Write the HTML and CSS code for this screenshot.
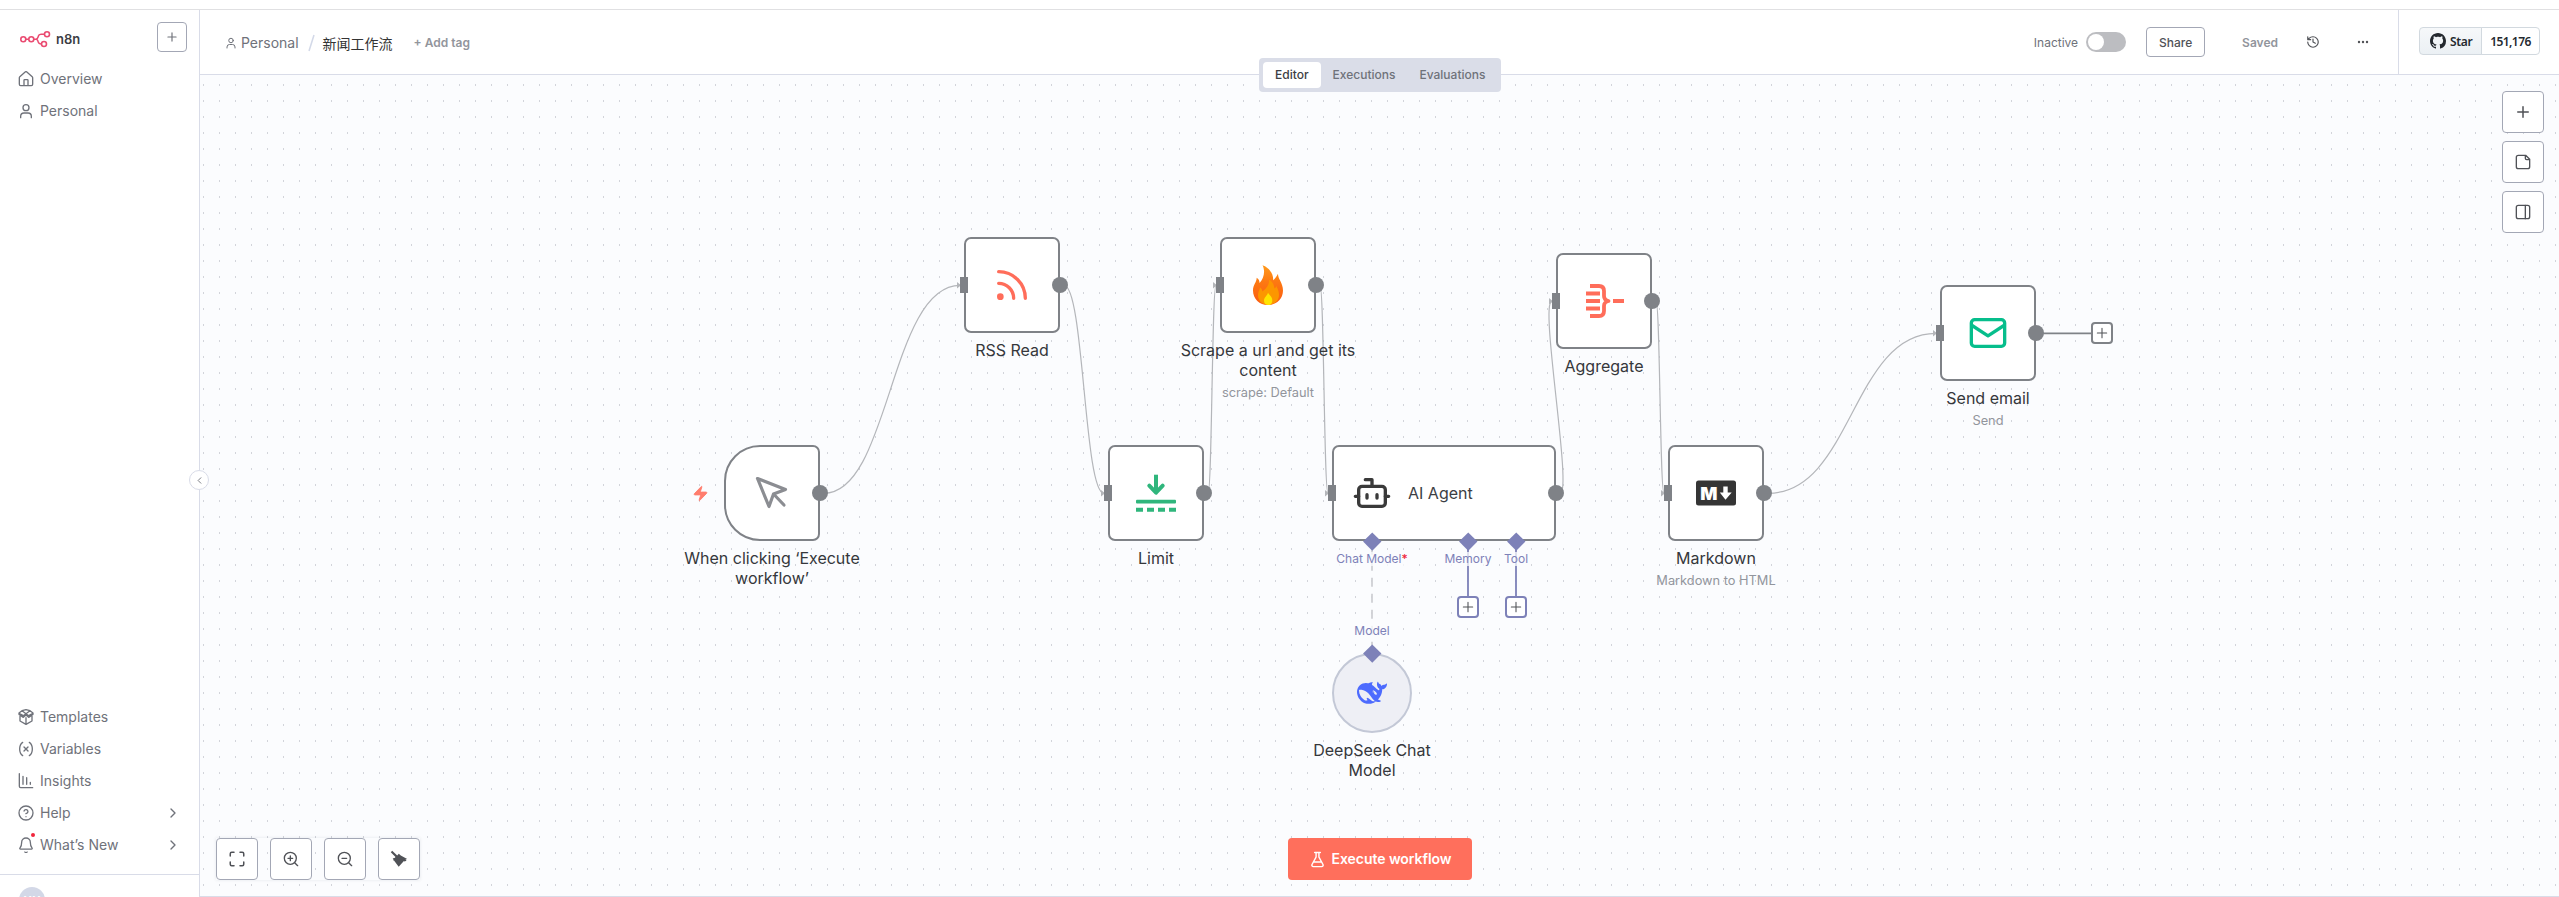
FILE: index.html
```html
<!DOCTYPE html>
<html lang="en">
<head>
<meta charset="utf-8">
<title>n8n workflow</title>
<link rel="stylesheet" href="styles.css">
</head>
<body>
<svg width="0" height="0" class="defs">
  <symbol id="plus" viewBox="0 0 24 24"><path d="M5 12h14M12 5v14"/></symbol>
  <symbol id="user" viewBox="0 0 24 24"><circle cx="12" cy="7" r="4.5"/><path d="M20 22v-2a5 5 0 0 0-5-5H9a5 5 0 0 0-5 5v2"/></symbol>
  <symbol id="chev" viewBox="0 0 24 24"><path d="m9 18 6-6-6-6"/></symbol>
</svg>
<div class="app">
  <aside class="sidebar">
    <div class="brand">
      <svg class="logo" width="31" height="18" viewBox="0 0 31 18"><circle cx="3.3" cy="9.2" r="2.5"/><circle cx="11.3" cy="9.2" r="2.5"/><circle cx="27" cy="4.2" r="2.5"/><circle cx="24" cy="14" r="2.5"/><path d="M5.8 9.2h3M13.8 9.2h2q1.800 0 2.200-2l.3-1q.5-2 2.700-2h3.500M15.800 9.200q1.800 0 2.200 2l.3.900q.5 1.900 3.200 1.900"/></svg>
      <span class="brand-name">n8n</span>
      <button class="add"><svg class="ic" width="14" height="14"><use href="#plus"/></svg></button>
    </div>
    <nav class="menu">
      <a class="item"><svg class="ic" width="16" height="16" viewBox="0 0 24 24"><path d="M15 22v-8a1 1 0 0 0-1-1h-4a1 1 0 0 0-1 1v8M2 10a2 2 0 0 1 .7-1.500l8-7a2 2 0 0 1 2.600 0l8 7A2 2 0 0 1 22 10v10a2 2 0 0 1-2 2H4a2 2 0 0 1-2-2z"/></svg>Overview</a>
      <a class="item"><svg class="ic" width="16" height="16"><use href="#user"/></svg>Personal</a>
    </nav>
    <nav class="menu bottom">
      <a class="item"><svg class="ic" width="16" height="16" viewBox="0 0 24 24"><path d="M12 13v9M3 11v7l9 5 9-5v-7M12 7l-6-4.500L1.500 6v2L8 12.500 12 9l4 3.500L22.500 8V6L18 2.500zM1.500 6.500 8 10l4-3 4 3 6.500-3.500M6 2.500 12 1l6 1.500"/></svg>Templates</a>
      <a class="item"><svg class="ic" width="16" height="16" viewBox="0 0 24 24"><path d="M7 2s-4.500 3-4.500 10S7 22 7 22M17 2s4.500 3 4.500 10S17 22 17 22M15 9l-6 6M9 9l6 6"/></svg>Variables</a>
      <a class="item"><svg class="ic" width="16" height="16" viewBox="0 0 24 24"><path d="M2 1v19a2 2 0 0 0 2 2h18M7.500 17V5M13 17V7M18.500 17v-3"/></svg>Insights</a>
      <a class="item"><svg class="ic" width="16" height="16" viewBox="0 0 24 24"><circle cx="12" cy="12" r="10.500"/><path d="M9.090 9a3 3 0 0 1 5.830 1c0 2-3 3-3 3M12 17.500h.01"/></svg>Help<svg class="ic go" width="16" height="16"><use href="#chev"/></svg></a>
      <a class="item"><span class="bell"><svg class="ic" width="16" height="16" viewBox="0 0 24 24"><path d="M10.300 22.500a2 2 0 0 0 3.400 0M3 16.500a1 1 0 0 0 .7 1.700h16.600a1 1 0 0 0 .7-1.700C19.400 15 18.500 13 18.500 8a6.500 6.500 0 0 0-13 0c0 5-1 7-2.500 8.500z"/></svg><i class="dot"></i></span>What’s New<svg class="ic go" width="16" height="16"><use href="#chev"/></svg></a>
    </nav>
    <div class="account"><span class="avatar">XX</span></div>
  </aside>

  <main class="main">
    <header class="header">
      <div class="crumbs">
        <svg class="ic" width="12" height="12"><use href="#user"/></svg>
        <span class="crumb">Personal</span>
        <svg class="slash" width="7" height="18" viewBox="0 0 7 18"><path d="M1 17 6 1"/></svg>
        <span class="title">新闻工作流</span>
        <span class="tag">+ Add tag</span>
      </div>
      <div class="actions">
        <span class="inactive">Inactive</span>
        <span class="toggle"><i></i></span>
        <button class="share">Share</button>
        <span class="saved">Saved</span>
        <svg class="ic history" width="14" height="14" viewBox="0 0 24 24"><path d="M3 12a9 9 0 1 0 9-9 9.750 9.750 0 0 0-6.740 2.740L3 8M3 3v5h5M12 7v5l4 2"/></svg>
        <svg class="more" width="12" height="4" viewBox="0 0 12 4"><circle cx="2" cy="2" r="1.200"/><circle cx="6" cy="2" r="1.200"/><circle cx="10" cy="2" r="1.200"/></svg>
      </div>
      <div class="github">
        <span class="gh-star"><svg width="16" height="16" viewBox="0 0 16 16"><path d="M8 0C3.580 0 0 3.580 0 8c0 3.540 2.290 6.530 5.470 7.590.4.070.55-.17.55-.38 0-.19-.01-.82-.01-1.490-2.010.37-2.530-.49-2.690-.94-.09-.23-.48-.94-.82-1.130-.28-.15-.68-.52-.01-.53.63-.01 1.080.58 1.230.82.72 1.210 1.870.87 2.330.66.07-.52.28-.87.51-1.070-1.780-.2-3.640-.89-3.640-3.950 0-.87.31-1.590.82-2.150-.08-.2-.36-1.020.08-2.120 0 0 .67-.21 2.200.82.64-.18 1.320-.27 2-.27s1.360.09 2 .27c1.530-1.040 2.200-.82 2.200-.82.44 1.100.16 1.920.08 2.120.51.56.82 1.270.82 2.150 0 3.070-1.870 3.750-3.650 3.950.29.25.54.73.54 1.480 0 1.070-.01 1.930-.01 2.200 0 .21.15.46.55.38A8.010 8.010 0 0 0 16 8c0-4.420-3.580-8-8-8z"/></svg>Star</span><span class="gh-count">151,176</span>
      </div>
    </header>

    <section class="canvas">
      <svg class="flow" viewBox="200 75 2359 821">
        <defs><pattern id="dots" x="203" y="84" width="16" height="16" patternUnits="userSpaceOnUse"><rect width="1" height="2" fill="#d2d4da"/></pattern></defs>
        <rect x="200" y="75" width="2359" height="821" fill="url(#dots)"/>
        <g class="edges">
          <path d="M824 493.300C890 493.300 890 285.300 960 285.300"/>
          <path d="M1064 285.300C1084 285.300 1084 493.300 1104 493.300"/>
          <path d="M1208 493.300C1212 493.300 1212 285.300 1216 285.300"/>
          <path d="M1320 285.300C1324 285.300 1324 493.300 1328 493.300"/>
          <path d="M1560 493.300C1573 493.300 1539 301.300 1552 301.300"/>
          <path d="M1656 301.300C1660 301.300 1660 493.300 1664 493.300"/>
          <path d="M1768 493.300C1852 493.300 1852 333.300 1936 333.300"/>
        </g>
        <path class="arrows" d="M957 282l4 3.300-4 3.300zM1101 490l4 3.300-4 3.300zM1213 282l4 3.300-4 3.300zM1325 490l4 3.300-4 3.300zM1549 298l4 3.300-4 3.300zM1661 490l4 3.300-4 3.300zM1933 330l4 3.300-4 3.300z"/>
        <path class="dashed" d="M1372 545.700V650"/>
        <path class="ai-line" d="M1468 545V596M1516 545V596"/>
        <path class="out-line" d="M2040 333.300H2091"/>
      </svg>

      <div class="node n-trigger"><svg class="bolt" width="17" height="17" viewBox="0 0 24 24"><path d="M4 14a1 1 0 0 1-.78-1.630l9.900-10.200a.5.5 0 0 1 .86.46l-1.920 6.020A1 1 0 0 0 13 10h7a1 1 0 0 1 .78 1.630l-9.900 10.200a.5.5 0 0 1-.86-.46l1.920-6.020A1 1 0 0 0 11 14z"/></svg>
        <svg class="g" width="40" height="40" viewBox="0 0 40 40"><g fill="none" stroke="#8b8d92" stroke-width="3.200" stroke-linecap="round" stroke-linejoin="round"><path d="M5.500 5.500 33.500 16.500 21.500 21 17 33.500z"/><path d="m22 21.500 10 10.500"/></g></svg>
        <i class="out"></i></div>
      <div class="cap c-trigger">When clicking ‘Execute<br>workflow’</div>

      <div class="node n-rss"><i class="in"></i><svg class="g" width="40" height="40" viewBox="0 0 24 24"><g fill="none" stroke="#ff6d5a" stroke-width="2" stroke-linecap="round"><path d="M4 11a9 9 0 0 1 9 9M4 4a16 16 0 0 1 16 16"/></g><circle cx="5" cy="19" r="2" fill="#ff6d5a"/></svg><i class="out"></i></div>
      <div class="cap c-rss">RSS Read</div>

      <div class="node n-limit"><i class="in"></i><svg class="g" width="40" height="40" viewBox="0 0 40 40"><path fill="none" stroke="#2fb67c" stroke-width="4" stroke-linejoin="round" d="M20 1.700v18"/><path fill="none" stroke="#2fb67c" stroke-width="4" stroke-linecap="round" stroke-linejoin="round" d="m13.300 12.700 6.700 7 6.700-7"/><rect y="26.700" width="40" height="3.800" rx="1" fill="#2fb67c"/><path fill="#2fb67c" d="M0 34.700h7v4H0zM11 34.700h7v4h-7zM22 34.700h7v4h-7zM33 34.700h7v4h-7z"/></svg><i class="out"></i></div>
      <div class="cap c-limit">Limit</div>

      <div class="node n-scrape"><i class="in"></i><svg class="g" width="30" height="40" viewBox="0 0 30 40"><defs><linearGradient id="fire" x1="0" y1="0" x2="0" y2="1"><stop offset="0" stop-color="#ff9a1c"/><stop offset=".4" stop-color="#fd7a12"/><stop offset="1" stop-color="#fb5a12"/></linearGradient></defs><path fill="url(#fire)" d="M9.500.2C14 1.500 20.500 7 20.200 15.200 22 14 23.500 11.500 25 8.800 24.800 14 30 18 30 25.500 30 34 23.500 40 15 40S0 34 0 25.500C0 20 3.500 17.500 3.700 12.800 5.500 14 6.500 15.500 6.600 18 11 13.500 12.500 6 9.500.2z"/><path fill="#fc9600" d="M16 14.500C20 17 21 20 21.500 23.500 22.500 23 23 22 23.200 21 25 24 26 27 26 30 26 36 21 39.800 15.200 39.800S5 36 5 30C5 27 6.500 25.500 7 22.500 8.500 23.500 9.300 25 9.500 26.500 13.500 23.500 16.500 19.500 16 14.500z"/><path fill="#ffe400" d="M15 27.800C16 30 19.300 31.500 19.300 35.500 19.300 38.500 17.500 40 15.200 40S11 38.500 11 35.500C11 32.500 14 31 15 27.800z"/></svg><i class="out"></i></div>
      <div class="cap c-scrape">Scrape a url and get its<br>content<small>scrape: Default</small></div>

      <div class="node n-agent"><i class="in"></i><svg class="g" width="40" height="40" viewBox="0 0 24 24"><g fill="none" stroke="#3a3a3a" stroke-width="2" stroke-linecap="round" stroke-linejoin="round"><path d="M12 8V4H8"/><rect width="16" height="12" x="4" y="8" rx="2"/><path d="M2 14h2M20 14h2M15 13v2M9 13v2"/></g></svg><span>AI Agent</span><i class="out"></i></div>
      <i class="dia d-chat"></i><i class="dia d-mem"></i><i class="dia d-tool"></i>
      <div class="port p-chat">Chat Model<b>*</b></div><div class="port p-mem">Memory</div><div class="port p-tool">Tool</div><div class="port p-model">Model</div>
      <div class="nplus ai np-mem"><svg width="16" height="16" class="ic"><use href="#plus"/></svg></div>
      <div class="nplus ai np-tool"><svg width="16" height="16" class="ic"><use href="#plus"/></svg></div>

      <div class="node n-deep"><svg class="g" width="30" height="30" viewBox="0 0 24 24"><path fill="#4d6bfe" d="M23.748 4.482c-.254-.124-.364.113-.512.234-.051.039-.094.09-.137.136-.372.397-.806.657-1.373.626-.829-.046-1.537.214-2.163.848-.133-.782-.575-1.248-1.247-1.548-.352-.156-.708-.311-.955-.65-.172-.241-.219-.51-.305-.774-.055-.16-.11-.323-.293-.35-.2-.031-.278.136-.356.276-.313.572-.434 1.202-.422 1.840.027 1.436.633 2.580 1.838 3.393.137.093.172.187.129.323-.082.280-.18.552-.266.833-.055.179-.137.217-.329.140a5.526 5.526 0 0 1-1.736-1.180c-.857-.828-1.631-1.742-2.597-2.458a11.365 11.365 0 0 0-.689-.471c-.985-.957.130-1.743.388-1.836.270-.098.093-.432-.779-.428-.872.004-1.670.295-2.687.684a3.055 3.055 0 0 1-.465.137 9.597 9.597 0 0 0-2.883-.102c-1.885.210-3.390 1.102-4.497 2.623C.082 8.606-.231 10.684.152 12.850c.403 2.284 1.569 4.175 3.360 5.653 1.858 1.533 3.997 2.284 6.438 2.140 1.482-.085 3.133-.284 4.994-1.860.470.234.962.327 1.780.397.630.059 1.236-.03 1.705-.128.735-.156.684-.837.419-.961-2.155-1.004-1.682-.595-2.113-.926 1.096-1.296 2.746-2.642 3.392-7.003.05-.347.007-.565 0-.845-.004-.17.035-.237.230-.256a4.173 4.173 0 0 0 1.545-.475c1.396-.763 1.960-2.015 2.093-3.517.02-.23-.004-.467-.247-.588zM11.581 18c-2.089-1.642-3.102-2.183-3.520-2.160-.392.024-.321.471-.235.763.09.288.207.486.371.739.114.167.192.416-.113.603-.673.416-1.842-.14-1.897-.167-1.361-.802-2.500-1.860-3.301-3.307-.774-1.393-1.224-2.887-1.298-4.482-.02-.386.093-.522.477-.592a4.696 4.696 0 0 1 1.529-.039c2.132.312 3.946 1.265 5.468 2.774.868.860 1.525 1.887 2.202 2.891.720 1.066 1.494 2.082 2.480 2.914.348.292.625.514.891.677-.802.09-2.140.110-3.054-.614zm1-6.440a.306.306 0 0 1 .415-.287.302.302 0 0 1 .2.288.306.306 0 0 1-.31.307.303.303 0 0 1-.304-.308zm3.110 1.596c-.2.081-.399.151-.59.160a1.245 1.245 0 0 1-.798-.254c-.274-.23-.47-.358-.552-.758a1.730 1.730 0 0 1 .016-.588c.07-.327-.008-.537-.239-.727-.187-.156-.426-.199-.688-.199a.559.559 0 0 1-.254-.078c-.11-.054-.2-.19-.114-.358.028-.054.160-.186.192-.21.356-.202.767-.136 1.146.016.352.144.618.408 1.001.782.391.451.462.576.685.914.176.265.336.537.445.848.067.195-.019.354-.25.452z"/></svg></div>
      <i class="dia d-deep"></i>
      <div class="cap c-deep">DeepSeek Chat<br>Model</div>

      <div class="node n-agg"><i class="in"></i><svg class="g" width="40" height="40" viewBox="0 0 40 40"><g fill="none" stroke="#ff6d5a" stroke-width="3.800" stroke-linejoin="round"><path d="M2 12.500h14M2 20h14M2 27.500h14M29 20h11M6 5h9q5 0 5 5v5q0 4 4.500 5-4.500 1-4.500 5v5q0 5-5 5H6"/></g></svg><i class="out"></i></div>
      <div class="cap c-agg">Aggregate</div>

      <div class="node n-md"><i class="in"></i><svg class="g" width="40" height="26" viewBox="0 0 40 26"><rect y=".6" width="40" height="24.800" rx="2.500" fill="#353535"/><text class="md" x="12.800" y="19.500" text-anchor="middle">M</text><path fill="#fff" d="M27.300 6.400h4.400v6.100h4L29.500 19.700 23.800 12.500h3.500z"/></svg><i class="out"></i></div>
      <div class="cap c-md">Markdown<small>Markdown to HTML</small></div>

      <div class="node n-mail"><i class="in"></i><svg class="g" width="40" height="40" viewBox="0 0 24 24"><g fill="none" stroke="#06be8c" stroke-width="2" stroke-linejoin="round"><rect width="20" height="16" x="2" y="4" rx="2"/><path d="m2 7.200 10 6.500 10-6.500"/></g></svg><i class="out"></i></div>
      <div class="nplus np-out"><svg width="16" height="16" class="ic"><use href="#plus"/></svg></div>
      <div class="cap c-mail">Send email<small>Send</small></div>

      <div class="tools-right">
        <button><svg class="ic" width="18" height="18"><use href="#plus"/></svg></button>
        <button><svg class="ic" width="16" height="16" viewBox="0 0 24 24"><path d="M16 2H5a3 3 0 0 0-3 3v14a3 3 0 0 0 3 3h14a3 3 0 0 0 3-3V8zM15.500 2.500V6.500a2 2 0 0 0 2 2h4"/></svg></button>
        <button><svg class="ic" width="16" height="16" viewBox="0 0 24 24"><rect x="2" y="2" width="20" height="20" rx="3"/><path d="M15.500 2v20"/></svg></button>
      </div>

      <div class="dock">
        <div class="tools">
          <button><svg class="ic" width="18" height="18" viewBox="0 0 24 24"><path d="M8 3H5a2 2 0 0 0-2 2v3M21 8V5a2 2 0 0 0-2-2h-3M3 16v3a2 2 0 0 0 2 2h3M16 21h3a2 2 0 0 0 2-2v-3"/></svg></button>
          <button><svg class="ic" width="16" height="16" viewBox="0 0 24 24"><circle cx="11" cy="11" r="9"/><path d="m22 22-4.500-4.500M11 7.500v7M7.500 11h7"/></svg></button>
          <button><svg class="ic" width="16" height="16" viewBox="0 0 24 24"><circle cx="11" cy="11" r="9"/><path d="m22 22-4.500-4.500M7.500 11h7"/></svg></button>
          <button><svg width="18" height="18" viewBox="0 0 18 18"><path fill="#505257" d="M.8 2.200 2.200.8l5 4.600 1.600-1.600 2 1.700L17.200 9l-1.700.5 1 1.300-2 .6-.6-.3-5.200 5.600L4 10.600l-1-.3.500-1.200-.9-.8 2-.4.900-.9z"/></svg></button>
        </div>
        <button class="execute"><svg class="ic" width="17" height="17" viewBox="0 0 24 24"><path d="M14 2v6a2 2 0 0 0 .25.960l5.510 10.080A2 2 0 0 1 18 22H6a2 2 0 0 1-1.760-2.960l5.510-10.080A2 2 0 0 0 10 8V2M6.450 15.500h11.100M8 2h8"/></svg><span>Execute workflow</span></button>
      </div>
    </section>
  </main>

  <div class="tabs"><span class="on">Editor</span><span>Executions</span><span>Evaluations</span></div>
  <button class="collapse"><svg class="ic" width="11" height="11" viewBox="0 0 24 24"><path d="m15 18-6-6 6-6"/></svg></button>
</div>
</body>
</html>
```
FILE: styles.css
```css
* { box-sizing: border-box; }
body { margin: 0; background: #fff; font-family: Inter, "Noto Sans CJK SC", sans-serif; color: #6f727a; }
button { font: inherit; color: inherit; padding: 0; margin: 0; background: #fff; border: 1px solid #a3a7b5; border-radius: 4px; display: flex; align-items: center; justify-content: center; }
i { display: block; font-style: normal; }
.defs { position: absolute; }
.ic { fill: none; stroke: currentColor; stroke-width: 2; stroke-linecap: round; stroke-linejoin: round; flex: none; }
.app { position: relative; display: flex; width: 2559px; height: 897px; padding-top: 9px; overflow: hidden; }
.app::before { content: ""; position: absolute; left: 0; right: 0; top: 9px; height: 1px; background: #e0e0e2; }

.sidebar { width: 200px; flex: none; border-right: 1px solid #d9dce8; display: flex; flex-direction: column; padding-top: 13px; }
.brand { display: flex; align-items: center; height: 30px; padding: 0 12px 0 20px; }
.logo { fill: none; stroke: #ea4b71; stroke-width: 1.600; margin-top: 4px; }
.brand-name { font-size: 13px; font-weight: 600; color: #3c3e44; margin: 4px 0 0 5px; flex: 1; }
.add { width: 30px; height: 30px; }
.menu { display: flex; flex-direction: column; padding: 11px 18px 0 18px; }
.item { display: flex; align-items: center; gap: 6px; height: 32px; padding-bottom: 2px; font-size: 14px; }
.item .ic { margin-top: 2px; }
.item .go { margin-left: auto; }
.bell { position: relative; display: flex; }
.dot { position: absolute; right: -1px; top: -2px; width: 4px; height: 4px; border-radius: 50%; background: #f0263c; }
.bottom { margin-top: auto; padding-top: 0; padding-bottom: 13px; }
.account { height: 23px; border-top: 1px solid #d9dce8; padding: 12px 0 0 19px; overflow: hidden; }
.avatar { display: flex; align-items: center; justify-content: center; width: 26px; height: 26px; border-radius: 50%; background: #d3d8e7; color: #fff; font-size: 12px; font-weight: 600; }

.main { flex: 1; display: flex; flex-direction: column; }
.header { height: 66px; flex: none; display: flex; border-bottom: 1px solid #d9dce8; padding-top: 1px; }
.crumbs { flex: 1; display: flex; align-items: center; padding-left: 25px; padding-top: 1px; font-size: 14px; }
.crumb { margin-left: 4px; }
.slash { margin: 0 8px 0 9px; fill: none; stroke: #d3d9e8; stroke-width: 1.500; }
.title { color: #333; }
.tag { margin-left: 21px; font-size: 12px; font-weight: 600; color: #92959c; }
.actions { display: flex; align-items: center; font-size: 12px; padding-right: 29px; }
.inactive { margin-right: 8px; padding-top: 1px; }
.toggle { width: 40px; height: 20px; border-radius: 10px; background: #bcbdc1; padding: 2px; margin-right: 20px; }
.toggle i { width: 16px; height: 16px; border-radius: 50%; background: #fff; }
.share { width: 59px; height: 30px; color: #505257; font-weight: 500; margin-right: 37px; }
.saved { font-weight: 600; color: #92959c; margin-right: 28px; }
.history { color: #505257; margin-right: 37px; }
.more { fill: #505257; }
.github { width: 161px; border-left: 1px solid #d9dce8; display: flex; align-items: center; padding: 0 0 2px 20px; font: 600 12px "Noto Sans", sans-serif; letter-spacing: -.6px; color: #24292f; }
.gh-star, .gh-count { height: 28px; display: flex; align-items: center; border: 1px solid #d2d9df; }
.gh-star { width: 63px; gap: 4px; padding-left: 10px; letter-spacing: -.3px; background: linear-gradient(#f6f8fa, #ebf0f4); border-radius: 4px 0 0 4px; }
.gh-star svg { fill: #24292f; }
.gh-count { width: 59px; margin-left: -1px; justify-content: center; border-radius: 0 4px 4px 0; }

.tabs { position: absolute; left: 1259px; top: 58px; width: 242px; height: 34px; border-radius: 4px; background: #dadde8; display: flex; padding: 4px; font-size: 12px; font-weight: 500; }
.tabs span { display: flex; align-items: center; padding: 0 12px 2px; border-radius: 4px; }
.tabs .on { background: #fff; color: #3c3e44; }
.collapse { position: absolute; left: 189px; top: 470px; width: 20px; height: 20px; border-radius: 50%; border-color: #d9dce8; }

.canvas { flex: 1; background: #fbfcfe; border-bottom: 1px solid #d9dce8; display: flex; flex-direction: column; }
.flow { position: absolute; left: 200px; top: 75px; width: 2359px; height: 821px; }
.edges path { fill: none; stroke: #b4b6ba; stroke-width: 1.200; }
.arrows { fill: #b4b6ba; }
.dashed { fill: none; stroke: #cfd0d4; stroke-width: 1.800; stroke-dasharray: 9 7; }
.ai-line { fill: none; stroke: #7d81b8; stroke-width: 1.800; }
.out-line { fill: none; stroke: #7f8287; stroke-width: 1.800; }

.node { position: absolute; width: 96px; height: 96px; background: #fff; border: 2px solid #7f8287; border-radius: 7px; display: flex; align-items: center; justify-content: center; }
.in, .out { position: absolute; background: #7f8287; height: 16px; top: 50%; margin-top: -8px; }
.in { width: 8px; left: -6px; }
.out { width: 16px; border-radius: 50%; right: -10px; }
.n-trigger { left: 724px; top: 445.300px; border-radius: 36px 7px 7px 36px; }
.n-rss { left: 964px; top: 237.300px; }
.n-limit { left: 1108px; top: 445.300px; }
.n-scrape { left: 1220px; top: 237.300px; }
.n-agent { left: 1332px; top: 445.300px; width: 224px; justify-content: flex-start; gap: 16px; padding-left: 18px; font-size: 16px; color: #3c3e44; }
.n-agg { left: 1556px; top: 253.300px; }
.n-md { left: 1668px; top: 445.300px; }
.n-mail { left: 1940px; top: 285.300px; }
.n-deep { left: 1332px; top: 653.300px; width: 80px; height: 80px; border-radius: 50%; background: #eeeff5; border-color: #c3c8d6; }
.bolt { position: absolute; left: -34px; top: 38px; fill: #ff7d6d; stroke: #ff7d6d; stroke-width: 1.300; stroke-linejoin: round; }
.md { font-size: 18px; font-weight: 900; fill: #fff; }

.cap { position: absolute; width: 210px; margin-left: -105px; text-align: center; font-size: 16px; line-height: 20px; color: #35373b; }
.cap small { display: block; font-size: 12.800px; line-height: 16px; margin-top: 5px; color: #92959c; }
.c-trigger { left: 772px; top: 548px; }
.c-rss { left: 1012px; top: 340px; }
.c-limit { left: 1156px; top: 548px; }
.c-scrape { left: 1268px; top: 340px; }
.c-deep { left: 1372px; top: 740px; }
.c-agg { left: 1604px; top: 356px; }
.c-md { left: 1716px; top: 548px; }
.c-mail { left: 1988px; top: 388px; }

.dia { position: absolute; width: 12.500px; height: 12.500px; margin: -6.250px; background: #7d81b8; transform: rotate(45deg); }
.d-chat { left: 1372px; top: 541.300px; }
.d-mem { left: 1468px; top: 541.300px; }
.d-tool { left: 1516px; top: 541.300px; }
.d-deep { left: 1372px; top: 653.300px; }
.port { position: absolute; transform: translate(-50%, -50%); white-space: nowrap; font-size: 12px; line-height: 14px; color: #7d81b8; background: rgba(251, 252, 254, .75); }
.port b { color: #f0263c; font-weight: 500; }
.p-chat { left: 1372px; top: 559px; }
.p-mem { left: 1468px; top: 559px; }
.p-tool { left: 1516px; top: 559px; }
.p-model { left: 1372px; top: 631px; }
.nplus { position: absolute; width: 22px; height: 22px; margin: -11px; background: #fff; border: 2px solid #7f8287; border-radius: 4px; display: flex; align-items: center; justify-content: center; color: #505257; }
.nplus .ic { stroke-width: 1.600; margin: -3px; }
.ai { border-color: #7d81b8; }
.np-mem { left: 1468px; top: 607.300px; }
.np-tool { left: 1516px; top: 607.300px; }
.np-out { left: 2102px; top: 333.300px; }

.tools-right { position: relative; align-self: flex-end; display: flex; flex-direction: column; gap: 8px; padding: 16px 15px 0 0; }
.tools-right button, .tools button { width: 42px; height: 42px; color: #505257; }
.dock { position: relative; margin-top: auto; display: flex; padding: 0 0 16px 16px; }
.tools { display: flex; gap: 12px; margin-right: 868px; box-shadow: 0 0 3px rgba(60, 70, 100, .12); }
.execute { width: 184px; height: 42px; gap: 6px; background: #ff6f5c; border: 0; color: #fff; font-size: 14px; font-weight: 600; letter-spacing: -.05px; }
.execute span { padding-bottom: 1px; }
```
